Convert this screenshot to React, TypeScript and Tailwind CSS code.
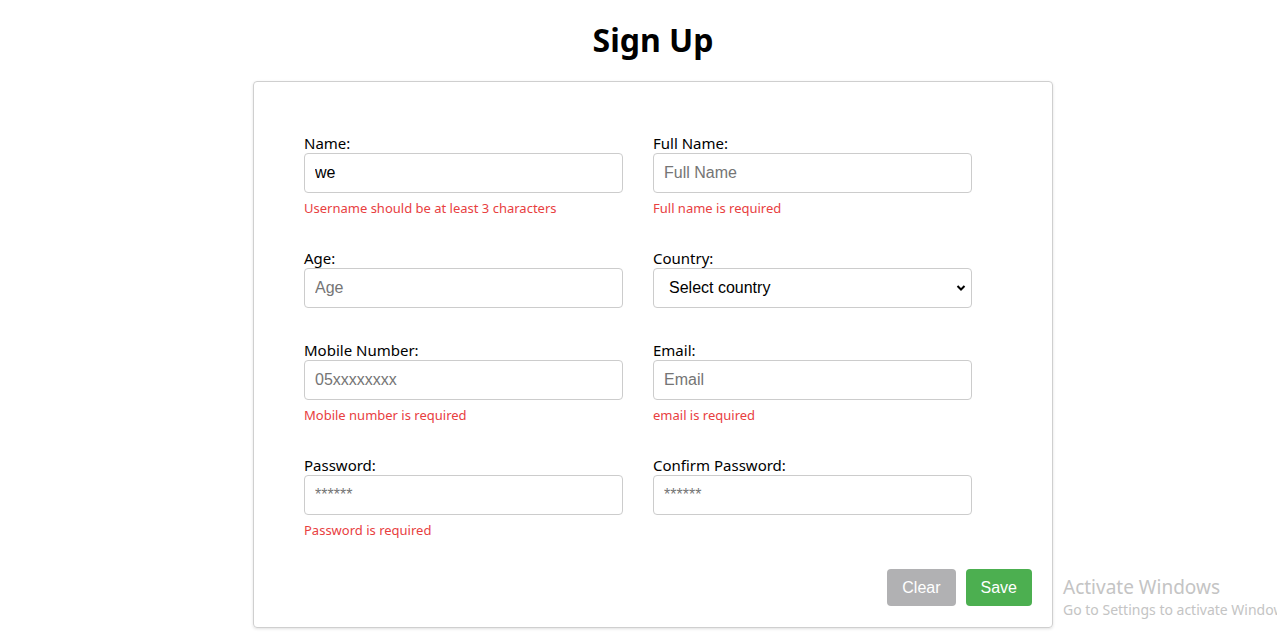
import React from "react";

const labelCls = "block text-[15px] leading-[20px] text-black";
const inputCls =
  "block w-full h-[40px] border border-[#cccccc] rounded-[4px] px-[10px] text-[16px] text-black placeholder:text-[#757575] outline-none bg-white";
const errCls = "mt-[7px] text-[13px] leading-[16px] text-[#e8403f]";
const ui = { fontFamily: '"Noto Sans", "Open Sans", sans-serif' };
const arial = { fontFamily: '"Liberation Sans", Arial, sans-serif' };

function Field({
  label,
  placeholder,
  value,
  error,
  type = "text",
}: {
  label: string;
  placeholder: string;
  value?: string;
  error?: string;
  type?: string;
}) {
  return (
    <div>
      <label className={labelCls}>{label}</label>
      <input
        type={type}
        className={inputCls}
        style={arial}
        placeholder={placeholder}
        defaultValue={value}
      />
      {error && <div className={errCls}>{error}</div>}
    </div>
  );
}

export default function App() {
  return (
    <div className="min-h-[636px] bg-white relative overflow-hidden" style={ui}>
      <div className="flex flex-col items-center pl-[29px] pt-[20px]">
        <h1 className="text-[32px] leading-[40px] font-bold text-black mb-[21px]">Sign Up</h1>
        <div className="w-[800px] border border-[#cfcfcf] rounded-[4px] shadow-[0_1px_3px_rgba(0,0,0,0.12)] px-[20px] pt-[20px] pb-[21px]">
          <div className="pl-[30px] pt-[31px]">
            <div className="grid grid-cols-[319px_319px] gap-x-[30px] gap-y-[32px] items-start">
              <Field label="Name:" placeholder="Name" value="we" error="Username should be at least 3 characters" />
              <Field label="Full Name:" placeholder="Full Name" error="Full name is required" />
              <Field label="Age:" placeholder="Age" type="text" />
              <div>
                <label className={labelCls}>Country:</label>
                <div className="relative">
                  <select
                    className="block w-full h-[40px] border border-[#cccccc] rounded-[4px] pl-[15px] pr-[30px] text-[16px] text-black bg-white appearance-none outline-none"
                    style={arial}
                    defaultValue=""
                  >
                    <option value="">Select country</option>
                  </select>
                  <svg
                    className="absolute right-[6px] top-[16px] pointer-events-none"
                    width="10"
                    height="8"
                    viewBox="0 0 10 8"
                  >
                    <path d="M1.5 2 L5 5.5 L8.5 2" stroke="#000" strokeWidth="2" fill="none" />
                  </svg>
                </div>
              </div>
              <Field label="Mobile Number:" placeholder="05xxxxxxxx" error="Mobile number is required" />
              <Field label="Email:" placeholder="Email" error="email is required" />
              <Field label="Password:" placeholder="******" type="password" error="Password is required" />
              <Field label="Confirm Password:" placeholder="******" type="password" />
            </div>
          </div>
          <div className="flex justify-end gap-[10px] mt-[31px]" style={arial}>
            <button className="h-[37px] px-[15px] rounded-[4px] bg-[#b1b1b3] text-white text-[16px]">Clear</button>
            <button className="h-[37px] px-[15px] rounded-[4px] bg-[#4caf50] text-white text-[16px]">Save</button>
          </div>
        </div>
      </div>
      <div className="absolute left-[1063px] top-[575px] whitespace-nowrap text-[#c4c4c4] pointer-events-none">
        <div className="text-[19px] leading-[24px]">Activate Windows</div>
        <div className="text-[14px] leading-[22px]">Go to Settings to activate Windows.</div>
      </div>
    </div>
  );
}
